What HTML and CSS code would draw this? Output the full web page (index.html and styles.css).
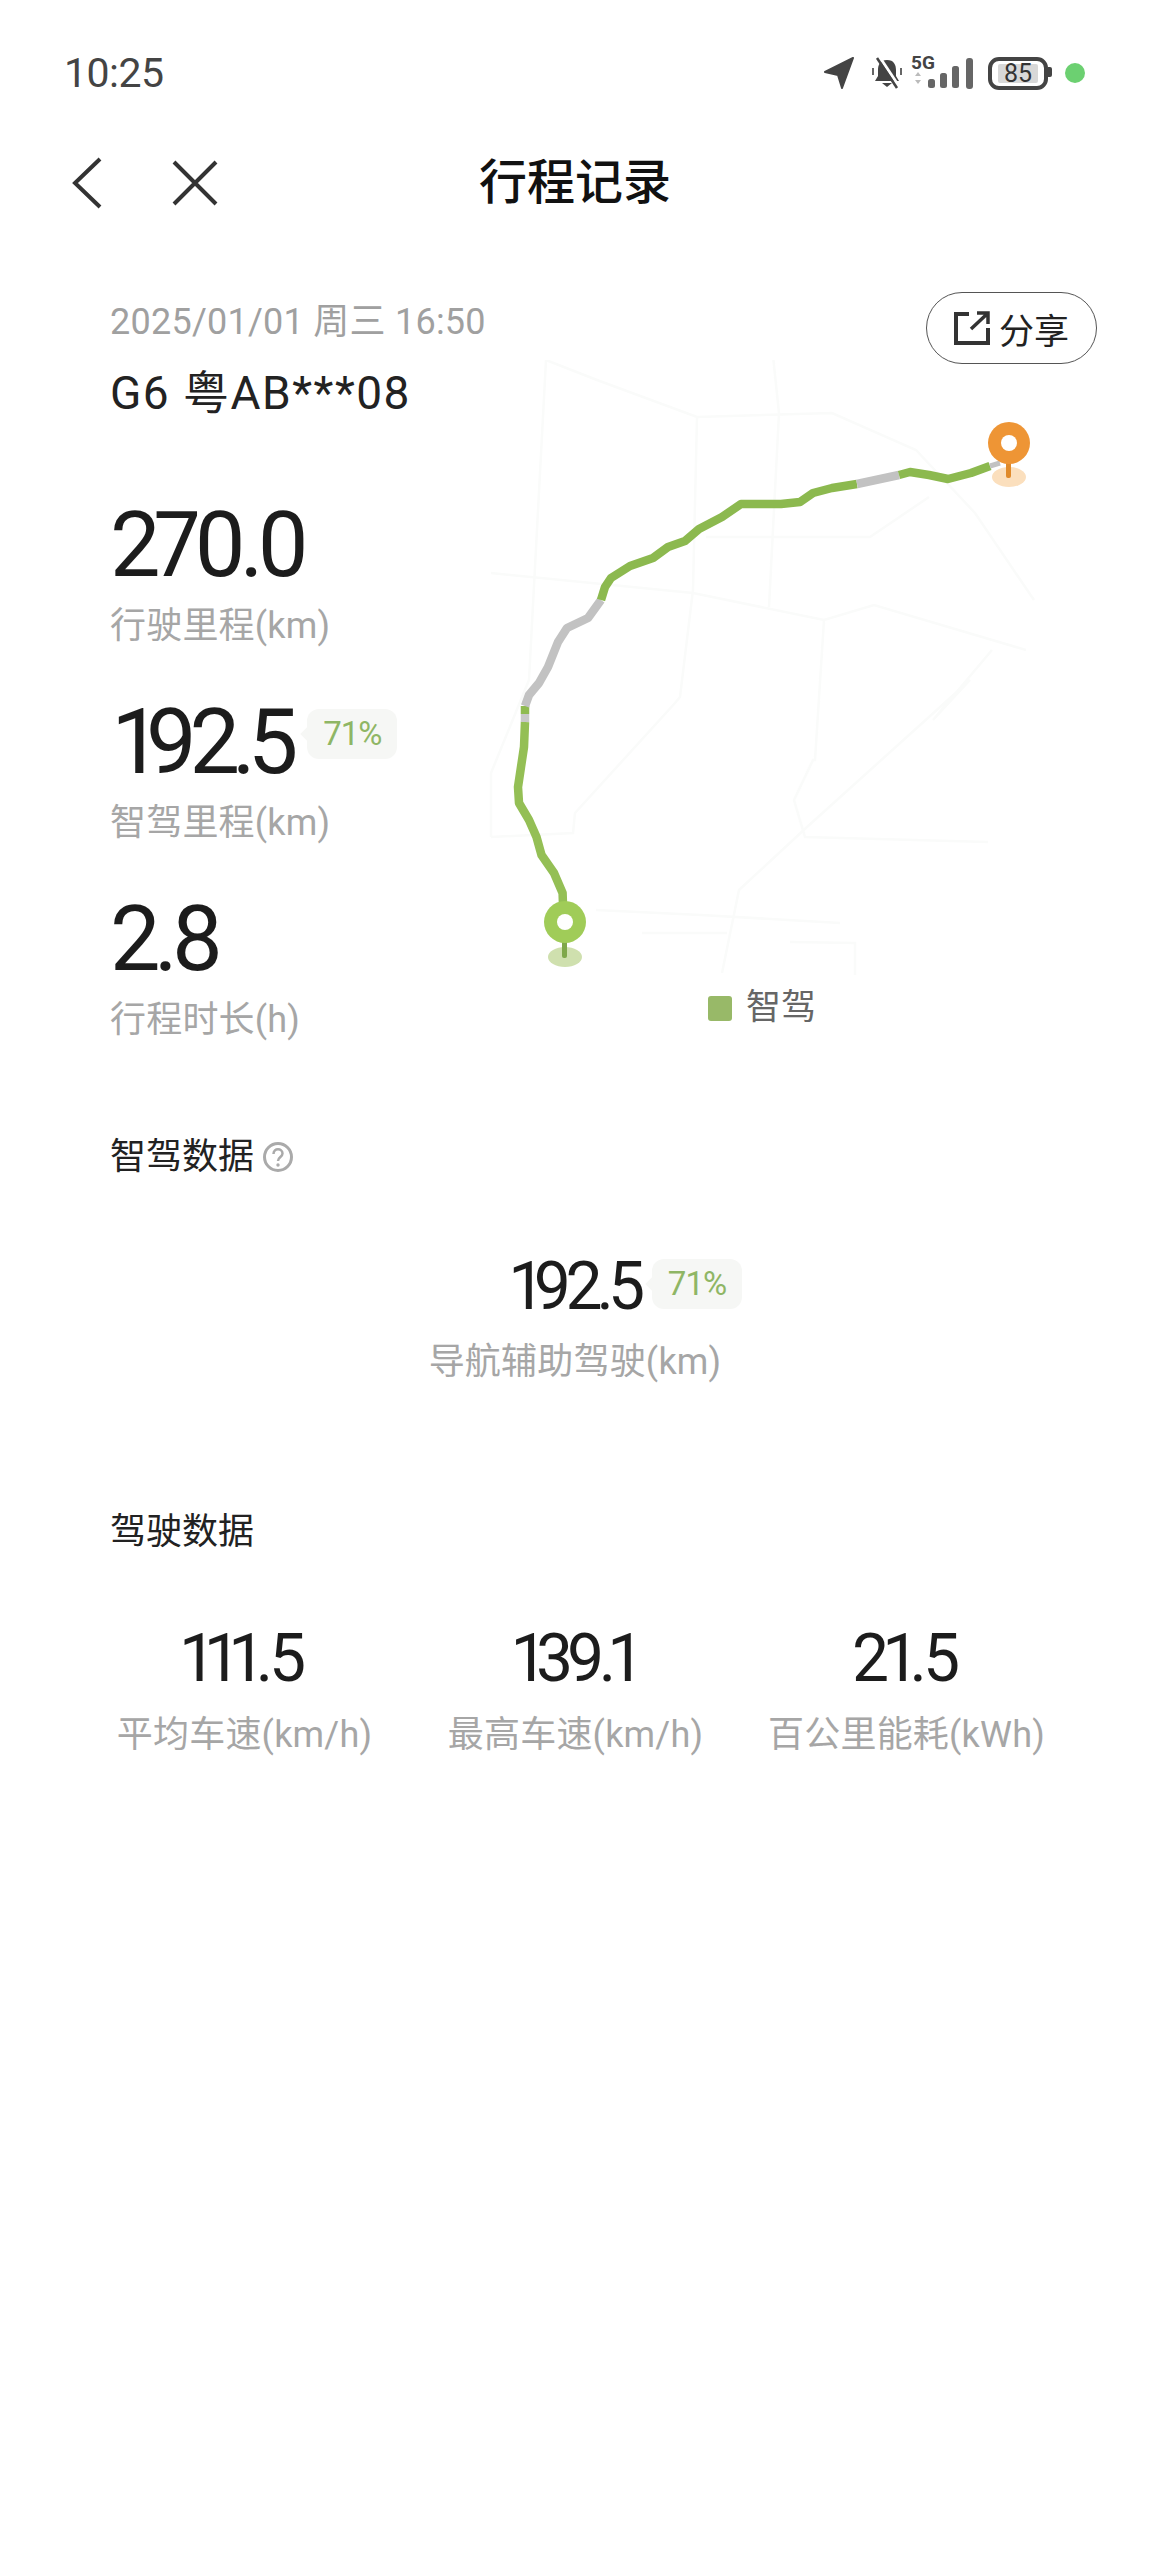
FILE: index.html
```html
<!DOCTYPE html>
<html lang="zh-CN">
<head>
    <meta charset="UTF-8">
    <meta name="viewport" content="width=device-width, initial-scale=1.0">
    <title>行程记录</title>
    <link rel="stylesheet" href="styles.css">
</head>
<body>
    <div class="status-bar">
        <span class="status-time">10:25</span>
        <div class="status-icons">
            <svg class="icon-location" width="30" height="32" viewBox="0 0 30 32">
                <path d="M29 1 L1 15 L14 18 L18 31 Z" fill="#444" stroke="#444" stroke-width="2" stroke-linejoin="round"/>
            </svg>
            <svg class="icon-bell" width="30" height="32" viewBox="0 0 30 32">
                <path d="M15 3 C8 3 6 8 6 13 V19 L3 24 H27 L24 19 V13 C24 8 22 3 15 3 Z" fill="#444"/>
                <path d="M10 26 H20 L15 30 Z" fill="#444"/>
                <path d="M1 11 V18 M29 11 V18" stroke="#666" stroke-width="2"/>
                <path d="M7.5 0 L27.5 30" stroke="#fff" stroke-width="3"/>
                <path d="M5 1 L25 31" stroke="#444" stroke-width="2.5"/>
            </svg>
            <div class="signal">
                <span class="signal-label">5G</span>
                <svg class="signal-bars" width="50" height="31" viewBox="0 0 50 31">
                    <path d="M3 18 L6 14 L9 18 Z M3 22 L6 26 L9 22 Z" fill="#bbb"/>
                    <rect x="16" y="21" width="7" height="9" rx="2.5" fill="#666"/>
                    <rect x="28" y="15" width="7" height="15" rx="2.5" fill="#666"/>
                    <rect x="40" y="8" width="7" height="22" rx="2.5" fill="#666"/>
                </svg>
                <svg class="signal-top" width="7" height="31" viewBox="0 0 7 31">
                    <rect width="7" height="31" rx="3" fill="#666"/>
                </svg>
            </div>
            <div class="battery">
                <span class="battery-level">85</span>
            </div>
            <span class="status-dot"></span>
        </div>
    </div>

    <div class="nav-bar">
        <div class="nav-actions">
            <svg width="32" height="54" viewBox="0 0 32 54">
                <path d="M29 3 L4 27 L29 51" fill="none" stroke="#333" stroke-width="4"/>
            </svg>
            <svg width="48" height="48" viewBox="0 0 48 48">
                <path d="M3 3 L45 45 M45 3 L3 45" fill="none" stroke="#333" stroke-width="4"/>
            </svg>
        </div>
        <h1 class="nav-title">行程记录</h1>
    </div>

    <div class="trip">
        <div class="trip-info">
            <div class="trip-date">2025/01/01 周三 16:50</div>
            <div class="trip-car">G6 粤AB***08</div>

            <div class="stat stat-first">
                <div class="stat-value">270.0</div>
                <div class="stat-label">行驶里程(km)</div>
            </div>
            <div class="stat">
                <div class="stat-row">
                    <span class="stat-value stat-value-tight">192.5</span>
                    <span class="badge badge-large">71%</span>
                </div>
                <div class="stat-label">智驾里程(km)</div>
            </div>
            <div class="stat">
                <div class="stat-value">2.8</div>
                <div class="stat-label">行程时长(h)</div>
            </div>
        </div>

        <div class="trip-map">
            <svg class="map" width="640" height="625" viewBox="470 360 640 625">
                <g fill="none" stroke="#fafbfa" stroke-width="2.5">
                    <path d="M546 360 L529 680 L491 773 L491 837"/>
                    <path d="M546 360 L597 380 L697 417 L832 413 L916 450 L975 513 L1034 600"/>
                    <path d="M697 417 L693 590 L680 697 L675 703 L575 813 L573 833 L491 837"/>
                    <path d="M771 337 L779 413 L769 607"/>
                    <path d="M491 573 L693 593 L824 620 L874 605 L1026 650"/>
                    <path d="M824 620 L815 760 L813 760 L794 800 L805 837 L988 842"/>
                    <path d="M706 537 L870 537 L929 497"/>
                    <path d="M992 650 L933 720 L970 680 L807 827 L739 890 L722 973"/>
                    <path d="M596 910 L701 915 L840 923"/>
                    <path d="M642 933 L727 933"/>
                    <path d="M790 942 L855 943 L855 975"/>
                </g>
                <g fill="none" stroke-width="8.5" stroke-linejoin="round" stroke-linecap="butt">
                    <path stroke="#94bf55" d="M563 905 L562.6 893 L554 873 L541.5 855 L536.5 837 L529 820 L519 803 L518 787 L521 767 L524 747 L525 722"/>
                    <path stroke="#c8c8c8" d="M525 722 L525 714"/>
                    <path stroke="#8fbb50" d="M525 714 L525 706"/>
                    <path stroke="#c2c2c2" d="M525 706 L529 695 L539 683 L548 667 L558 642 L567 628 L588 618 L601 600"/>
                    <path stroke="#8cb94f" d="M601 600 L605 587 L611 578 L630 566 L653 558 L668 547 L685 541 L699 529 L722 517 L741 504 L760 504 L781 504 L800 502 L813 493 L832 488 L857 484"/>
                    <path stroke="#c2c2c2" d="M857 484 L899 475"/>
                    <path stroke="#8cb94f" d="M899 475 L910 472 L929 475 L948 479 L971 473 L990 466"/>
                    <path stroke="#c2c2c2" stroke-width="5" d="M990 466 L1000 463"/>
                </g>
                <ellipse cx="565" cy="957" rx="17" ry="10" fill="#cfe0ae"/>
                <rect x="562" y="940" width="5" height="18" rx="2" fill="#7fa84a"/>
                <circle cx="565" cy="922" r="21" fill="#a0cc58"/>
                <circle cx="565" cy="922" r="8" fill="#fff"/>
                <ellipse cx="1009" cy="477" rx="17" ry="10" fill="#fbdfbd"/>
                <rect x="1006" y="460" width="5" height="18" rx="2" fill="#e08a2a"/>
                <circle cx="1009" cy="443" r="21" fill="#ee9535"/>
                <circle cx="1009" cy="443" r="8" fill="#fff"/>
            </svg>
            <div class="legend">
                <span class="legend-mark"></span>
                <span class="legend-text">智驾</span>
            </div>
        </div>

        <button class="share-btn">
            <svg width="36" height="34" viewBox="0 0 36 34">
                <path d="M15 3 H2 V32 H34 V17" fill="none" stroke="#333" stroke-width="4"/>
                <path d="M17 18 L33 3 M23 2 H34 V13" fill="none" stroke="#333" stroke-width="3.5"/>
            </svg>
            <span>分享</span>
        </button>
    </div>

    <section class="section section-assist">
        <div class="section-title">
            智驾数据
            <svg width="32" height="32" viewBox="0 0 32 32">
                <circle cx="16" cy="16" r="13.5" fill="none" stroke="#aaa" stroke-width="3"/>
                <path d="M11.5 13 C11.5 6.5 20.5 7 20.5 12.5 C20.5 16 16 16 16 20" fill="none" stroke="#aaa" stroke-width="2.5"/>
                <circle cx="16" cy="24" r="1.7" fill="#aaa"/>
            </svg>
        </div>
        <div class="assist">
            <div class="assist-value">
                <span class="stat-value stat-value-small stat-value-narrow">192.5</span>
                <span class="badge badge-side">71%</span>
            </div>
            <div class="stat-label">导航辅助驾驶(km)</div>
        </div>
    </section>

    <section class="section section-drive">
        <div class="section-title">驾驶数据</div>
        <div class="drive-grid">
            <div class="drive-item">
                <div class="stat-value stat-value-small">111.5</div>
                <div class="stat-label">平均车速(km/h)</div>
            </div>
            <div class="drive-item">
                <div class="stat-value stat-value-small stat-value-narrow">139.1</div>
                <div class="stat-label">最高车速(km/h)</div>
            </div>
            <div class="drive-item">
                <div class="stat-value stat-value-small">21.5</div>
                <div class="stat-label">百公里能耗(kWh)</div>
            </div>
        </div>
    </section>
</body>
</html>
```

FILE: styles.css
```css
* {
    margin: 0;
    padding: 0;
    box-sizing: border-box;
}

body {
    width: 1150px;
    height: 2556px;
    background: #fff;
    color: #222;
    font-family: Roboto, "Noto Sans CJK SC", sans-serif;
    overflow: hidden;
}

/* status bar */
.status-bar {
    height: 146px;
    padding: 0 65px 0 64px;
    display: flex;
    align-items: center;
    justify-content: space-between;
}

.status-time {
    font-size: 41px;
    color: #444;
    letter-spacing: -0.5px;
}

.status-icons {
    display: flex;
    align-items: center;
}

.icon-location {
    margin-right: 18px;
}

.icon-bell {
    margin-right: 10px;
}

.signal {
    width: 62px;
    height: 32px;
    display: flex;
    align-items: flex-end;
    position: relative;
}

.signal-label {
    position: absolute;
    left: -1px;
    top: -3px;
    font-size: 19px;
    line-height: 18px;
    font-weight: 700;
    color: #444;
}

.signal-bars {
    display: block;
}

.signal-top {
    margin-left: 4px;
}

.battery {
    width: 60px;
    height: 33px;
    margin-left: 14px;
    border: 4px solid #444;
    border-radius: 11px;
    position: relative;
    display: flex;
    align-items: center;
    justify-content: center;
}

.battery::after {
    content: "";
    position: absolute;
    right: -8px;
    top: 6px;
    width: 4px;
    height: 10px;
    background: #444;
    border-radius: 0 2px 2px 0;
}

.battery-level {
    width: 40px;
    height: 19px;
    background: #d8d8d8;
    font-size: 25px;
    line-height: 19px;
    color: #333;
    text-align: center;
    border-radius: 2px;
}

.status-dot {
    width: 20px;
    height: 20px;
    margin-left: 17px;
    border-radius: 50%;
    background: #6cd071;
}

/* nav */
.nav-bar {
    height: 74px;
    padding-left: 71px;
    display: flex;
    align-items: center;
    position: relative;
}

.nav-actions {
    display: flex;
    align-items: center;
    gap: 68px;
}

.nav-title {
    position: absolute;
    left: 0;
    right: 0;
    top: 0;
    text-align: center;
    font-size: 48px;
    line-height: 74px;
    font-weight: 500;
    color: #111;
    pointer-events: none;
}

/* trip summary + map */
.trip {
    padding-top: 79px;
    display: flex;
    position: relative;
}

.trip-info {
    width: 470px;
    padding-left: 110px;
}

.trip-date {
    font-size: 36px;
    line-height: 46px;
    letter-spacing: 0.25px;
    color: #a0a0a0;
    white-space: nowrap;
}

.trip-car {
    margin-top: 22px;
    font-size: 46px;
    line-height: 52px;
    letter-spacing: 1.5px;
    color: #222;
    white-space: nowrap;
}

.stat {
    margin-top: 44px;
}

.stat-first {
    margin-top: 77px;
}

.stat-value {
    font-size: 90px;
    line-height: 100px;
    letter-spacing: -6.5px;
    font-variant-numeric: proportional-nums;
    color: #1c1c1c;
}

.stat-value-tight {
    margin-left: 5px;
    letter-spacing: -8px;
}

.stat-value-small {
    font-size: 66px;
    line-height: 70px;
    letter-spacing: -4px;
}

.stat-value-narrow {
    letter-spacing: -6px;
}

.stat-row {
    display: flex;
    align-items: flex-start;
}

.stat-label {
    margin-top: 7px;
    font-size: 36px;
    line-height: 46px;
    letter-spacing: 0.2px;
    color: #a6a6a6;
    white-space: nowrap;
}

.badge {
    height: 50px;
    width: 90px;
    background: #f6f7f5;
    border-radius: 12px;
    color: #8fb665;
    font-size: 33px;
    line-height: 50px;
    letter-spacing: -1px;
    text-align: center;
}

.badge::before {
    content: "";
    position: absolute;
    left: -3px;
    top: 16px;
    width: 18px;
    height: 18px;
    background: #f6f7f5;
    transform: rotate(45deg);
    z-index: -1;
}

.badge-large {
    margin: 16px 0 0 17px;
    position: relative;
    z-index: 0;
}

.badge-side {
    position: absolute;
    left: 100%;
    top: 7px;
    margin-left: 13px;
    z-index: 0;
}

.trip-map {
    width: 640px;
    padding-top: 61px;
    display: flex;
    flex-direction: column;
}

.map {
    display: block;
}

.legend {
    margin: 3px 0 0 238px;
    display: flex;
    align-items: center;
    gap: 14px;
}

.legend-mark {
    width: 24px;
    height: 25px;
    background: #98b968;
    border-radius: 3px;
}

.legend-text {
    font-size: 35px;
    line-height: 40px;
    color: #666;
}

.share-btn {
    position: absolute;
    top: 72px;
    left: 926px;
    width: 171px;
    height: 72px;
    border: 1px solid #555;
    border-radius: 36px;
    background: #fff;
    font-family: inherit;
    font-size: 35px;
    color: #222;
    display: flex;
    align-items: center;
    justify-content: center;
    gap: 9px;
}

/* lower sections */
.section-assist {
    margin-top: 91px;
}

.section-title {
    padding-left: 110px;
    font-size: 36px;
    line-height: 46px;
    color: #222;
    display: flex;
    align-items: center;
    gap: 8px;
}

.assist {
    margin-top: 72px;
    display: flex;
    flex-direction: column;
    align-items: center;
}

.assist-value {
    position: relative;
    display: flex;
}

.assist .stat-label {
    margin-top: 17px;
}

.section-drive {
    margin-top: 124px;
}

.drive-grid {
    margin-top: 69px;
    padding-left: 79px;
    display: grid;
    grid-template-columns: repeat(3, 331px);
    text-align: center;
}

.drive-item .stat-value {
    padding-right: 5px;
}

.drive-item .stat-label {
    margin-top: 18px;
}
```
